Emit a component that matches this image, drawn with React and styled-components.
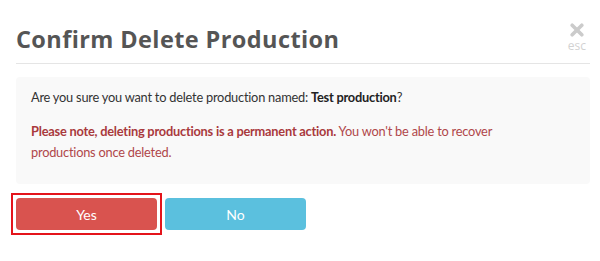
import React from "react";
import styled, { createGlobalStyle } from "styled-components";

const Global = createGlobalStyle`
  html, body { margin: 0; padding: 0; background: #fff; }
  body { font-family: Lato, "Open Sans", sans-serif; color: #333; }
`;

const Modal = styled.div`
  width: 600px;
  padding: 16px 10px 0 16px;
  box-sizing: border-box;
`;

const Header = styled.div`
  display: flex;
  justify-content: space-between;
  align-items: flex-start;
  border-bottom: 1px solid #e5e5e5;
  padding: 9px 0 10px;
`;

const Title = styled.h2`
  margin: 0;
  font-family: "Open Sans", sans-serif;
  font-weight: 700;
  font-size: 23.5px;
  letter-spacing: 0.4px;
  line-height: 28px;
  color: #555;
`;

const Close = styled.button`
  display: flex;
  flex-direction: column;
  align-items: center;
  gap: 3px;
  border: 0;
  background: none;
  padding: 0;
  margin: -2px 4px 0 0;
  cursor: pointer;
`;

const Esc = styled.span`
  font-family: "Open Sans", sans-serif;
  font-size: 12px;
  line-height: 12px;
  color: #d2d2d2;
`;

const Box = styled.div`
  margin-top: 13px;
  background: #f9f9f9;
  border-radius: 4px;
  padding: 10px 15px 21px;
`;

const Para = styled.p`
  margin: 0 0 ${(p) => p.$gap || 0}px;
  max-width: ${(p) => p.$max || "none"};
  font-family: Lato, sans-serif;
  font-size: 12.8px;
  letter-spacing: -0.22px;
  line-height: 21px;
  color: ${(p) => (p.$danger ? "#b0474a" : "#333")};
`;

const Strong = styled.strong`
  font-weight: 700;
  color: ${(p) => (p.$danger ? "#a93a3d" : "#222")};
`;

const Actions = styled.div`
  display: flex;
  align-items: center;
  gap: 3px;
  margin: 9px 0 0 -5px;
`;

const FocusRing = styled.span`
  display: inline-flex;
  padding: 3px;
  border: 2px solid #e4141b;
`;

const Button = styled.button`
  width: 141px;
  height: 32px;
  border: 0;
  border-radius: 4px;
  font-family: Lato, sans-serif;
  font-size: 14px;
  color: #fff;
  background: ${(p) => (p.$variant === "danger" ? "#d9534f" : "#5bc0de")};
  cursor: pointer;
  outline: none;
`;

export default function App() {
  return (
    <>
      <Global />
      <Modal>
        <Header>
          <Title>Confirm Delete Production</Title>
          <Close aria-label="close">
            <svg width="14" height="14" viewBox="0 0 14 14">
              <path d="M2.2 2.2 L11.8 11.8 M11.8 2.2 L2.2 11.8" stroke="#cbcbcb" strokeWidth="3.6" strokeLinecap="round" />
            </svg>
            <Esc>esc</Esc>
          </Close>
        </Header>
        <Box>
          <Para $gap={13}>
            Are you sure you want to delete production named: <Strong>Test production</Strong>?
          </Para>
          <Para $danger $max="480px">
            <Strong $danger>Please note, deleting productions is a permanent action.</Strong> You won't be able to recover productions once deleted.
          </Para>
        </Box>
        <Actions>
          <FocusRing>
            <Button $variant="danger">Yes</Button>
          </FocusRing>
          <Button $variant="info">No</Button>
        </Actions>
      </Modal>
    </>
  );
}
